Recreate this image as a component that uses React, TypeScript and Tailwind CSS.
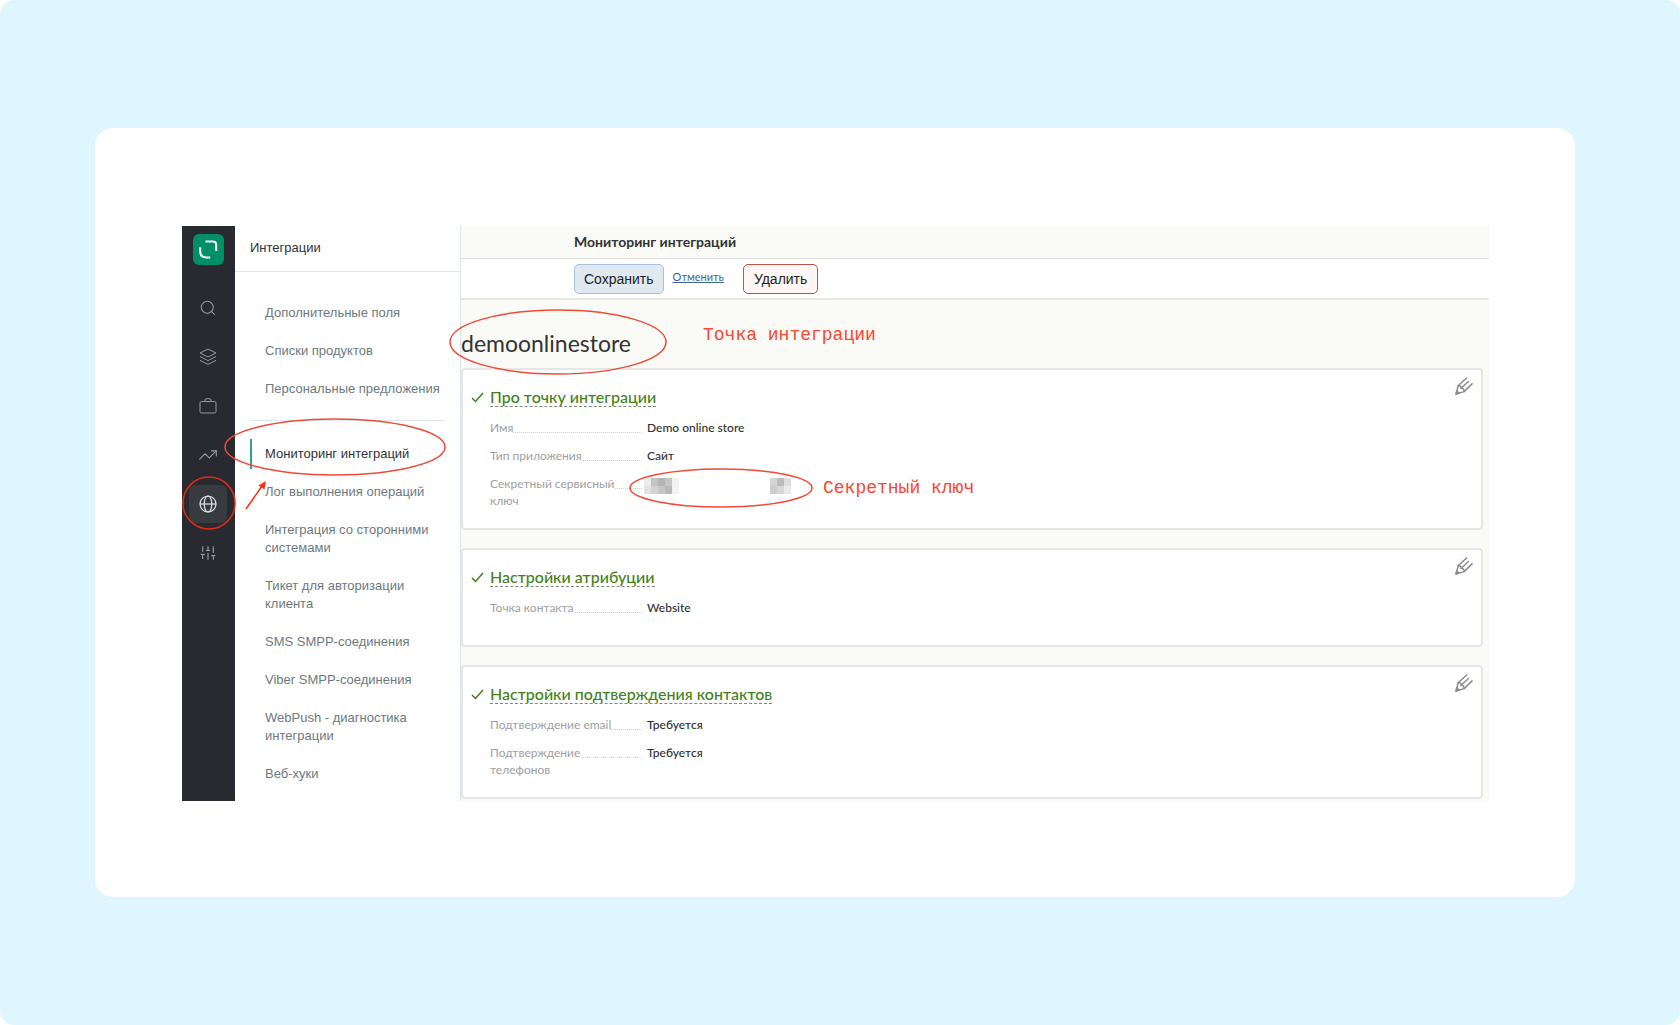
import React from "react";
import { Search, TrendingUp } from "lucide-react";

type Row = { label: string; value: string };

const primaryLinks = ["Дополнительные поля", "Списки продуктов", "Персональные предложения"];

const secondaryLinks = [
  "Мониторинг интеграций",
  "Лог выполнения операций",
  "Интеграция со сторонними системами",
  "Тикет для авторизации клиента",
  "SMS SMPP-соединения",
  "Viber SMPP-соединения",
  "WebPush - диагностика интеграции",
  "Веб-хуки",
];

function Logo() {
  return (
    <svg className="h-[31px] w-[31px]" viewBox="0 0 31 31" fill="none" aria-hidden="true">
      <rect width="31" height="31" rx="6" fill="#008f67" />
      <path d="M12.5 7.6h7.3q3.4 0 3.4 3.4v6" stroke="#f4fbf8" strokeWidth="2" />
      <path d="M7.2 13.2v4.4q0 5.8 5.8 5.8h4.2" stroke="#f4fbf8" strokeWidth="2" />
    </svg>
  );
}

function LayersIcon() {
  return (
    <svg width="18" height="18" viewBox="0 0 18 18" fill="none" stroke="currentColor" strokeLinejoin="round" aria-hidden="true">
      <path d="M9 1 17 5 9 9 1 5Z" />
      <path d="m1 8.6 8 4 8-4" />
      <path d="m1 12.4 8 4 8-4" />
    </svg>
  );
}

function BriefcaseIcon() {
  return (
    <svg width="18" height="18" viewBox="0 0 18 18" fill="none" stroke="currentColor" aria-hidden="true">
      <rect x="1" y="4.5" width="16" height="11.5" rx="1.5" />
      <path d="M6 4.5V3q0-1.2 1.2-1.2h3.6Q12 1.8 12 3v1.5" />
    </svg>
  );
}

function GlobeIcon() {
  return (
    <svg width="18" height="18" viewBox="0 0 18 18" fill="none" stroke="currentColor" strokeWidth="1.2" aria-hidden="true">
      <circle cx="9" cy="9" r="8" />
      <ellipse cx="9" cy="9" rx="3.8" ry="8" />
      <path d="M1 9h16" />
    </svg>
  );
}

function SlidersIcon() {
  return (
    <svg width="16" height="16" viewBox="0 0 24 24" fill="none" stroke="currentColor" strokeWidth="1.8" aria-hidden="true">
      <path d="M4 21v-7M4 10V2M12 22V12M12 8V2M20 22v-6M20 12V2M1 14h6M9 8h6M17 16h6" />
    </svg>
  );
}

function CheckIcon() {
  return (
    <svg width="13" height="11" viewBox="0 0 13 11" fill="none" stroke="#3f7f1c" strokeWidth="1.5" aria-hidden="true">
      <path d="m1 6 3.5 3.5L12 1" />
    </svg>
  );
}

function PencilIcon() {
  return (
    <svg width="18" height="18" viewBox="0 0 18 18" fill="none" stroke="#8b8b8b" strokeWidth="1.5" strokeLinecap="round" strokeLinejoin="round" aria-hidden="true">
      <path d="M11.6 1 3.2 8.8 1 17l8.2-2.4L17 6.9" />
      <path d="M3.2 8.8c2-.4 3 .8 2.900 2.400 1.900-.2 3.100 1.200 3.100 3.400" />
      <path d="m6.1 11.200 7.400-6.700" />
      <path d="M1 17l.8-3 2.200 2.100Z" fill="#8b8b8b" />
    </svg>
  );
}

const railItems = [
  { label: "Поиск", icon: <Search size={18} strokeWidth={1.4} /> },
  { label: "Продукты", icon: <LayersIcon /> },
  { label: "Кампании", icon: <BriefcaseIcon /> },
  { label: "Отчеты", icon: <TrendingUp size={20} strokeWidth={1.3} /> },
  { label: "Интеграции", icon: <GlobeIcon />, active: true },
  { label: "Настройки", icon: <SlidersIcon /> },
];

function Rail() {
  return (
    <nav aria-label="Разделы" className="flex w-[53px] shrink-0 flex-col items-center bg-[#292a30] pt-2 pr-px">
      <a href="#home" aria-label="Главная">
        <Logo />
      </a>
      <ul className="mt-6 flex flex-col gap-[11px]">
        {railItems.map((item) => (
          <li key={item.label}>
            <button
              type="button"
              aria-label={item.label}
              className={
                item.active
                  ? "flex h-[38px] w-[38px] items-center justify-center rounded-md bg-[#373b40] text-[#e4e5e6]"
                  : "flex h-[38px] w-[38px] items-center justify-center rounded-md text-[#97999c]"
              }
            >
              {item.icon}
            </button>
          </li>
        ))}
      </ul>
    </nav>
  );
}

function LinkList({ items, active }: { items: string[]; active?: string }) {
  return (
    <ul className="flex flex-col gap-2 text-[13px] leading-[18px]">
      {items.map((item) => (
        <li key={item}>
          <a
            href="#section"
            className={
              item === active
                ? "block border-l-2 border-[#2fa382] py-1.5 pl-[13px] text-[#2f3236]"
                : "block border-l-2 border-transparent py-1.5 pl-[13px] text-[#6c7a7f]"
            }
          >
            {item}
          </a>
        </li>
      ))}
    </ul>
  );
}

function Sidebar() {
  return (
    <aside className="w-[226px] shrink-0 border-r border-[#dbe4ea] bg-white font-['Liberation_Sans',Arial,sans-serif]">
      <h2 className="flex h-[46px] items-center border-b border-[#e1e8ec] px-[15px] pb-0.5 text-[13px] text-[#303236]">
        Интеграции
      </h2>
      <nav aria-label="Интеграции" className="px-[15px] pt-[26px]">
        <LinkList items={primaryLinks} />
        <hr className="mt-4 mb-[18px] border-[#dfe7eb]" />
        <LinkList items={secondaryLinks} active="Мониторинг интеграций" />
      </nav>
    </aside>
  );
}

function Card({ title, rows }: { title: string; rows: Row[] }) {
  return (
    <section className="flex min-h-[99px] items-start rounded border-2 border-[#e5e6e6] bg-white pt-[17px] pr-2 pb-[19px] pl-2">
      <span className="mt-[5px] mr-1.5 shrink-0">
        <CheckIcon />
      </span>
      <div className="min-w-0 flex-1">
        <h3 className="text-[16px] leading-5 font-medium text-[#44811a]">
          <a href="#edit" className="inline-block border-b border-dashed border-[#7b8b78] leading-[18px]">
            {title}
          </a>
        </h3>
        <dl className="mt-3 flex flex-col gap-[11px] text-[12px] leading-[17px]">
          {rows.map((row) => (
            <div key={row.label} className="flex gap-[5px]">
              <dt className="relative w-[152px] pr-4 text-[#a0a0a0]">
                <span className="absolute inset-x-0 top-0 h-[14px] border-b border-dotted border-[#d0d0d0]" />
                <span className="relative bg-white">{row.label}</span>
              </dt>
              <dd className="font-medium text-[#2f2f2f]">{row.value}</dd>
            </div>
          ))}
        </dl>
      </div>
      <button type="button" aria-label={"Изменить: " + title} className="-mt-2.5 shrink-0">
        <PencilIcon />
      </button>
    </section>
  );
}

const mosaic = [
  { x: 462, y: 252, c: "#ececec" },
  { x: 469, y: 252, c: "#c4c4c4" },
  { x: 476, y: 252, c: "#b5b5b5" },
  { x: 483, y: 252, c: "#c6c6c6" },
  { x: 490, y: 252, c: "#f1f1f1" },
  { x: 462, y: 260, c: "#e2e2e2" },
  { x: 469, y: 260, c: "#d3d3d3" },
  { x: 476, y: 260, c: "#c5c5c5" },
  { x: 483, y: 260, c: "#b9b9b9" },
  { x: 490, y: 260, c: "#f3f3f3" },
  { x: 588, y: 252, c: "#d5d5d5" },
  { x: 595, y: 252, c: "#bcbcbc" },
  { x: 602, y: 252, c: "#dedede" },
  { x: 588, y: 260, c: "#cdcdcd" },
  { x: 595, y: 260, c: "#d6d6d6" },
  { x: 602, y: 260, c: "#eaeaea" },
];

function Annotations() {
  return (
    <div className="pointer-events-none absolute inset-0 font-['Liberation_Mono','Courier_New',monospace] text-[18px] leading-6 text-[#fa4632]">
      <svg className="absolute inset-0 h-full w-full overflow-visible" fill="none" stroke="#f04a38" strokeWidth="1.5" aria-hidden="true">
        {mosaic.map((m) => (
          <rect key={m.x + "-" + m.y} x={m.x} y={m.y} width="7" height="8" fill={m.c} stroke="none" />
        ))}
        <ellipse cx="376" cy="116" rx="108" ry="32" />
        <ellipse cx="153" cy="221" rx="110" ry="28" />
        <circle cx="27" cy="277" r="26" stroke="#dc2c17" />
        <ellipse cx="539" cy="262" rx="91" ry="19" />
        <path d="m64 283 16-23" stroke="#ff2f14" />
        <path d="m84 255-1.5 8.5-6-4Z" fill="#ff2f14" stroke="none" />
      </svg>
      <p className="absolute top-[97px] left-[521px]">Точка интеграции</p>
      <p className="absolute top-[250px] left-[641px]">Секретный ключ</p>
    </div>
  );
}

export default function App() {
  return (
    <div className="min-h-screen bg-white">
      <div className="min-h-screen rounded-[14px] bg-[#dff6ff] pt-32 pr-[105px] pb-[127px] pl-[95px]">
        <div className="rounded-[18px] bg-white pt-[98px] pr-[86px] pb-24 pl-[87px]">
          <div className="relative flex">
            <Rail />
            <Sidebar />
            <main className="min-w-0 flex-1 bg-[#fafaf6] font-['Lato','Noto_Sans',sans-serif] text-[#333]">
              <header>
                <h1 className="border-b border-[#dcdddd] pl-[113px] text-[14px] leading-8 font-bold">
                  Мониторинг интеграций
                </h1>
                <div className="flex items-start border-b-2 border-[#e6e6e6] bg-white pt-[5px] pb-1 pl-[113px]">
                  <button
                    type="button"
                    className="h-[30px] rounded-[5px] border border-[#a4c2d8] bg-[#e0e9f0] px-[9px] font-['Liberation_Sans',Arial,sans-serif] text-[14px] leading-7 text-[#222]"
                  >
                    Сохранить
                  </button>
                  <a href="#cancel" className="ml-[9px] text-[11px] leading-[26px] text-[#3b668f] underline">
                    Отменить
                  </a>
                  <button
                    type="button"
                    className="ml-[19px] h-[30px] rounded-[5px] border border-[#bd5048] bg-[#fff6f5] px-2.5 font-['Liberation_Sans',Arial,sans-serif] text-[14px] leading-7 text-[#222]"
                  >
                    Удалить
                  </button>
                </div>
              </header>
              <h2 className="pt-7 pb-2.5 text-[23px] leading-[30px]">demoonlinestore</h2>
              <div className="flex flex-col gap-[18px] pr-1.5 pb-0.5">
                <Card
                  title="Про точку интеграции"
                  rows={[
                    { label: "Имя", value: "Demo online store" },
                    { label: "Тип приложения", value: "Сайт" },
                    { label: "Секретный сервисный ключ", value: "" },
                  ]}
                />
                <Card title="Настройки атрибуции" rows={[{ label: "Точка контакта", value: "Website" }]} />
                <Card
                  title="Настройки подтверждения контактов"
                  rows={[
                    { label: "Подтверждение email", value: "Требуется" },
                    { label: "Подтверждение телефонов", value: "Требуется" },
                  ]}
                />
              </div>
            </main>
            <Annotations />
          </div>
        </div>
      </div>
    </div>
  );
}
